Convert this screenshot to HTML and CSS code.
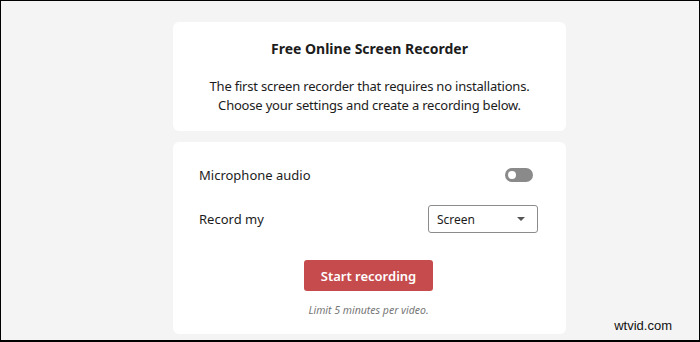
FILE: index.html
```html
<!DOCTYPE html>
<html lang="en">
<head>
    <meta charset="UTF-8">
    <title>Free Online Screen Recorder</title>
    <link rel="stylesheet" href="styles.css">
</head>
<body>
    <div class="frame">
        <div class="column">
            <div class="card intro">
                <h1>Free Online Screen Recorder</h1>
                <p>The first screen recorder that requires no installations.<br>Choose your settings and create a recording below.</p>
            </div>

            <div class="card settings">
                <div class="row">
                    <span class="label">Microphone audio</span>
                    <span class="toggle"><span class="knob"></span></span>
                </div>
                <div class="row">
                    <span class="label">Record my</span>
                    <div class="select">
                        <span>Screen</span>
                        <span class="caret"></span>
                    </div>
                </div>
                <button class="button-record">Start recording</button>
                <p class="limit">Limit 5 minutes per video.</p>
            </div>
        </div>
        <span class="watermark">wtvid.com</span>
    </div>
</body>
</html>
```

FILE: styles.css
```css
body {
    margin: 0;
    font-family: 'Noto Sans', sans-serif;
    color: #1c1c1c;
}

.frame {
    position: relative;
    box-sizing: border-box;
    width: 700px;
    height: 342px;
    background-color: #f4f4f4;
    border: 1px solid #000;
    border-bottom-width: 2px;
    padding: 21px 0 0 172px;
}

.column {
    width: 393px;
    display: flex;
    flex-direction: column;
    gap: 11px;
}

.card {
    background-color: #fff;
    border-radius: 6px;
}

.intro {
    height: 109px;
    box-sizing: border-box;
    padding-top: 17px;
    text-align: center;
}

h1 {
    margin: 0 0 18px;
    font-size: 14px;
    font-weight: 700;
    line-height: 20px;
}

.intro p {
    margin: 0;
    font-size: 13px;
    line-height: 19px;
    letter-spacing: -0.2px;
}

.settings {
    height: 192px;
    box-sizing: border-box;
    padding: 23px 28px 0 26px;
    display: flex;
    flex-direction: column;
}

.row {
    display: flex;
    justify-content: space-between;
    align-items: center;
    height: 20px;
    margin-bottom: 20px;
}

.row + .row {
    height: 28px;
    margin-bottom: 27px;
}

.label {
    font-size: 13px;
}

.toggle {
    width: 28px;
    height: 14px;
    border-radius: 7px;
    background-color: #8a8a8a;
    margin-right: 5px;
    display: flex;
    align-items: center;
    padding-left: 3px;
    box-sizing: border-box;
}

.knob {
    width: 8px;
    height: 8px;
    border-radius: 50%;
    background-color: #fff;
}

.select {
    width: 110px;
    height: 28px;
    box-sizing: border-box;
    border: 1px solid #8c8c8c;
    border-radius: 3px;
    display: flex;
    align-items: center;
    justify-content: space-between;
    padding: 0 12px 0 8px;
    font-size: 12px;
}

.caret {
    width: 0;
    height: 0;
    border-left: 4px solid transparent;
    border-right: 4px solid transparent;
    border-top: 4px solid #555;
}

.button-record {
    align-self: center;
    width: 129px;
    height: 31px;
    border: none;
    border-radius: 3px;
    background-color: #c64b4c;
    color: #fff;
    font-family: 'Noto Sans', sans-serif;
    font-size: 13px;
    font-weight: 600;
    cursor: pointer;
}

.limit {
    margin: 12px 0 0;
    text-align: center;
    font-size: 10.5px;
    font-style: italic;
    color: #777;
}

.watermark {
    position: absolute;
    right: 27px;
    bottom: 7px;
    font-family: 'Liberation Sans', Arial, sans-serif;
    font-size: 13px;
    color: #111;
}
```
